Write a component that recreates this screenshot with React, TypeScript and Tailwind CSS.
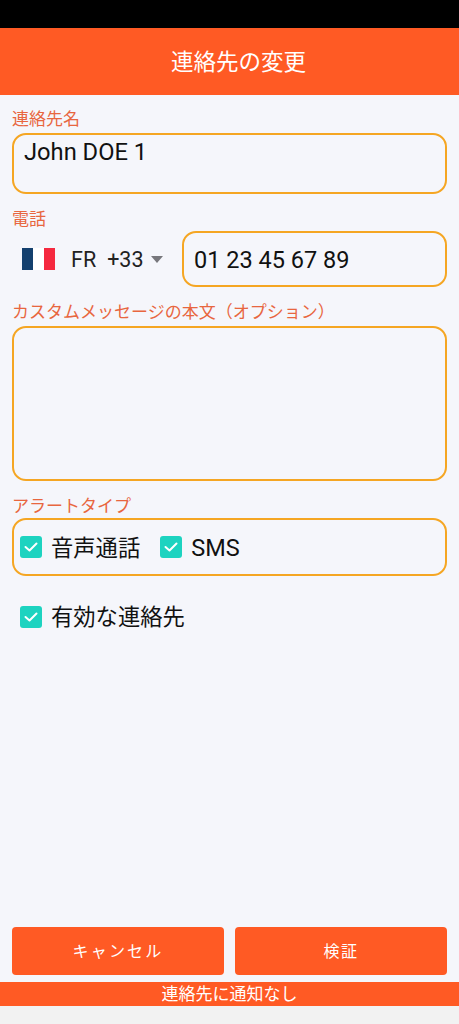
import { ReactNode } from "react";

const FONT = "font-['Roboto','Noto_Sans_CJK_JP',sans-serif]";

function FieldLabel({ children }: { children: ReactNode }) {
    return <div className="h-[18px] whitespace-nowrap px-3 text-[17px] leading-[18px] text-[#e8663f]">{children}</div>;
}

function Check({ label, latin }: { label: string; latin?: boolean }) {
    return (
        <div className="flex items-center gap-[9px]">
            <div className="flex h-[22px] w-[22px] items-center justify-center rounded-[3px] bg-[#1dd3c0]">
                <svg viewBox="0 0 22 22" className="h-[22px] w-[22px]" fill="none" stroke="#ffffff" strokeWidth="2" strokeLinecap="round" strokeLinejoin="round">
                    <path d="M5.5 11l4 3.5L16.5 7.5" />
                </svg>
            </div>
            <span className={`pt-[1px] leading-[26px] text-[#111111] ${latin ? "text-[23.5px]" : "text-[22.3px]"}`}>{label}</span>
        </div>
    );
}

export default function App() {
    return (
        <div className={`flex h-[1024px] w-[459px] flex-col overflow-hidden bg-[#f5f6fb] ${FONT}`}>
            <div className="h-[28px] bg-black" />
            <div className="flex h-[67px] items-center justify-center bg-[#ff5a24] pl-[18px] pt-[2px] text-[22.5px] text-white">連絡先の変更</div>

            <div className="mt-[15px]">
                <FieldLabel>連絡先名</FieldLabel>
            </div>
            <div className="mx-3 mt-[5px] h-[61px] rounded-[14px] border-2 border-[#f5a623] px-[10px] pt-[1px] text-[23.7px] leading-[33px] text-[#111111]">
                John DOE 1
            </div>

            <div className="mt-4">
                <FieldLabel>電話</FieldLabel>
            </div>
            <div className="mt-[3px] flex h-[56px] items-center pl-3 pr-3">
                <div className="flex w-[170px] items-center pl-[10px] text-[#222222]">
                    <div className="flex h-[22px] w-[33px]">
                        <div className="flex-1 bg-[#14406e]" />
                        <div className="flex-1 bg-white" />
                        <div className="flex-1 bg-[#f5293f]" />
                    </div>
                    <span className="ml-4 pt-[2px] text-[21.5px]">FR</span>
                    <span className="ml-[11px] pt-[2px] text-[21.5px]">+33</span>
                    <svg viewBox="0 0 12 7" className="ml-[7px] mt-[1px] h-[7px] w-[12px]" fill="#77777c">
                        <path d="M0 0h12L6 7z" />
                    </svg>
                </div>
                <div className="flex h-[56px] flex-1 items-center rounded-[14px] border-2 border-[#f5a623] px-[10px] pt-[3px] text-[23.5px] text-[#111111]">
                    01 23 45 67 89
                </div>
            </div>

            <div className="mt-4">
                <FieldLabel>カスタムメッセージの本文（オプション）</FieldLabel>
            </div>
            <div className="mx-3 mt-[5px] h-[155px] rounded-[14px] border-2 border-[#f5a623]" />

            <div className="mt-4">
                <FieldLabel>アラートタイプ</FieldLabel>
            </div>
            <div className="mx-3 mt-[3px] flex h-[58px] items-center gap-[20px] rounded-[14px] border-2 border-[#f5a623] pl-[6px]">
                <Check label="音声通話" />
                <Check label="SMS" latin />
            </div>

            <div className="ml-5 mt-[27px]">
                <Check label="有効な連絡先" />
            </div>

            <div className="mx-3 mt-auto flex gap-[11px]">
                <div className="flex h-[48px] flex-1 items-center justify-center rounded-[4px] bg-[#ff5a24] pt-[2px] text-[16px] tracking-[2.2px] text-white">キャンセル</div>
                <div className="flex h-[48px] flex-1 items-center justify-center rounded-[4px] bg-[#ff5a24] pt-[2px] text-[16px] tracking-[1.5px] text-white">検証</div>
            </div>
            <div className="mt-[7px] flex h-[24px] items-center justify-center bg-[#ff5a24] pt-[2px] text-[17px] text-white">連絡先に通知なし</div>
            <div className="h-[18px] bg-[#f2f2f2]" />
        </div>
    );
}
